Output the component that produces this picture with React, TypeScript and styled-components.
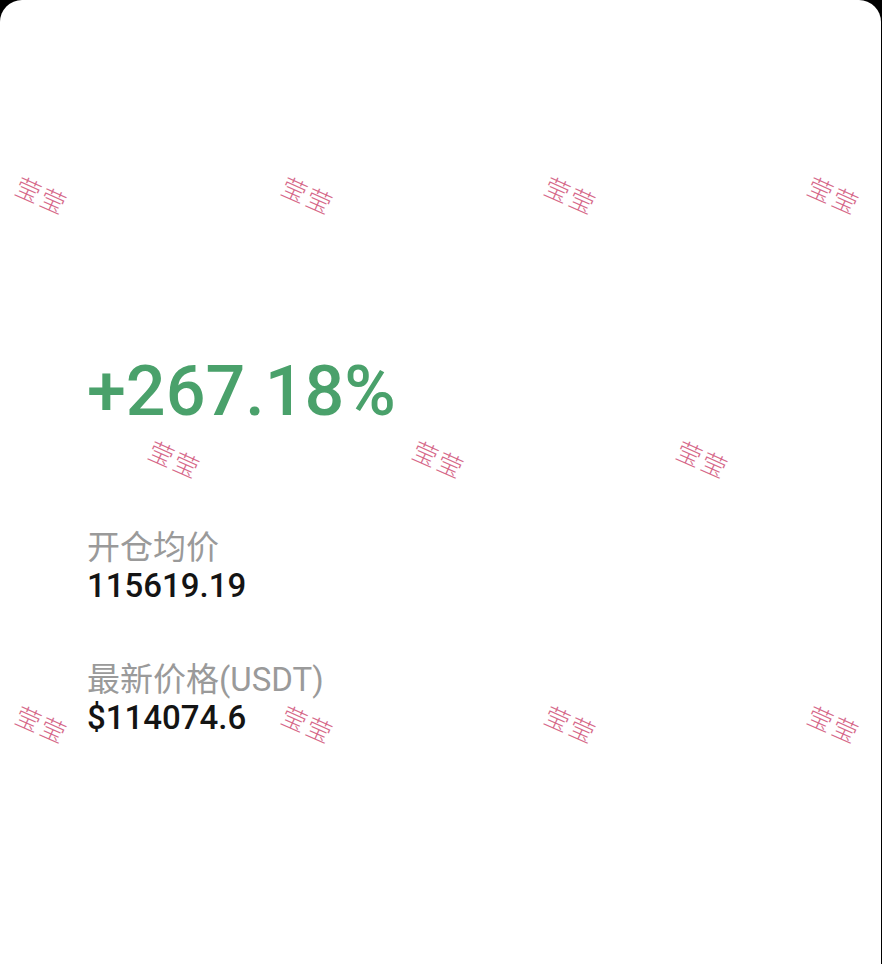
import React from "react";
import styled, { createGlobalStyle } from "styled-components";

const Global = createGlobalStyle`
  html, body {
    margin: 0;
    padding: 0;
    background: #000;
  }
  body {
    font-family: Roboto, "Noto Sans CJK SC", sans-serif;
  }
`;

const Card = styled.div`
  position: relative;
  box-sizing: border-box;
  width: 881px;
  height: 964px;
  background: #fff;
  border-radius: 22px 22px 0 0;
  overflow: hidden;
  padding: 356px 0 0 87px;
  display: flex;
  flex-direction: column;
`;

const Profit = styled.div`
  font-family: Roboto, sans-serif;
  font-weight: 500;
  font-size: 70px;
  line-height: 70px;
  color: #4aa16b;
  margin-bottom: 103px;
`;

const Group = styled.div`
  display: flex;
  flex-direction: column;
  margin-bottom: 56px;
`;

const Label = styled.div`
  font-family: Roboto, "Noto Sans CJK SC", sans-serif;
  font-size: 33px;
  line-height: 38px;
  color: #9a9a9a;
`;

const Value = styled.div`
  font-family: Roboto, sans-serif;
  font-weight: 500;
  font-size: 33px;
  line-height: 38px;
  color: #141414;
`;

const Overlay = styled.div`
  position: absolute;
  inset: 0;
  pointer-events: none;
`;

const Mark = styled.span`
  position: absolute;
  font-family: "Noto Sans CJK SC", sans-serif;
  font-weight: 300;
  font-size: 25px;
  letter-spacing: 2px;
  line-height: 25px;
  color: #d6698a;
  white-space: nowrap;
  transform: translate(-50%, -50%) rotate(24deg);
`;

const marks: [number, number][] = [
  [41, 195], [307, 195], [570, 195], [833, 195],
  [174, 459], [438, 459], [702, 459],
  [41, 724], [307, 724], [570, 724], [833, 724],
];

export default function App() {
  return (
    <>
      <Global />
      <Card>
        <Profit>+267.18%</Profit>
        <Group>
          <Label>开仓均价</Label>
          <Value>115619.19</Value>
        </Group>
        <Group>
          <Label>最新价格(USDT)</Label>
          <Value>$114074.6</Value>
        </Group>
        <Overlay>
          {marks.map(([x, y], i) => (
            <Mark key={i} style={{ left: x + 1, top: y }}>
              莹莹
            </Mark>
          ))}
        </Overlay>
      </Card>
    </>
  );
}
